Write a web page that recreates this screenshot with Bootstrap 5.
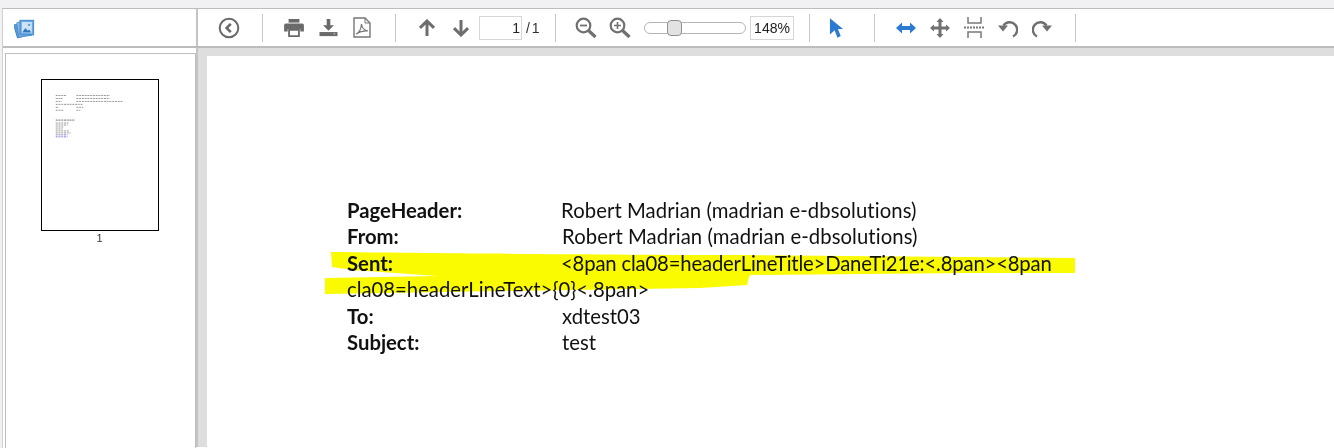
<!DOCTYPE html>
<html lang="en">
<head>
<meta charset="utf-8">
<title>PDF viewer</title>
<link href="https://cdn.jsdelivr.net/npm/bootstrap@5.3.0/dist/css/bootstrap.min.css" rel="stylesheet">
<style>
html,body{height:448px;overflow:hidden;background:#f6f6f6}
.viewer{height:448px;padding-top:8px;background:#f1f1f3}
.frame{height:440px;margin-left:2px;border-left:1px solid #d0d0d0;border-top:1px solid #bcbcbc;background:#fff}
.tbar{height:39px;border-bottom:2px solid #bcbcbc}
.thumb-head{width:195px;padding:2px 0 0 11px;border-right:2px solid #c4c4c4;height:37px}
.tb-tools{padding-left:14px}
.tb-btn{width:34px;height:34px;flex:none;background:none}
.tb-btn svg{display:block;margin:auto}
.tb-sep{width:1px;height:28px;background:#c8c8c8;flex:none;margin:0 14px 0 16px}
.num-box{font:14px/1 "Liberation Sans",sans-serif;color:#222;border:1px solid #d6d6d6;border-radius:0;height:24px;padding:0 1px;text-align:right;box-shadow:none}
.page-box{width:43px;margin-left:1px}
.zoom-box{width:44px;margin-left:4px;text-align:center}
.page-total{font:14px/1 "Liberation Sans",sans-serif;color:#333;margin-left:4px;width:12px;white-space:nowrap;word-spacing:-2px}
.sep-after-total{margin-left:17px;margin-right:13px}
.sep-before-select{margin-left:15px;margin-right:9px}
.sep-after-select{margin-left:21px}
.zoom-range{width:102px;height:16px;margin-left:7px;-webkit-appearance:none;appearance:none;background:transparent;padding:0}
.zoom-range::-webkit-slider-runnable-track{height:12px;border:1px solid #b5b5b5;border-radius:6px;background:#fff}
.zoom-range::-webkit-slider-thumb{-webkit-appearance:none;appearance:none;width:15px;height:16px;margin-top:-3px;border:1px solid #8f8f8f;border-radius:4px;background:#e2e2e2}
.work{height:399px}
.thumb-side{width:195px;padding:5px 0 0 2px;border-right:2px solid #c4c4c4;flex:none}
.thumb-box{width:191px;height:400px;border:1px solid #bfbfbf;padding:25px 2px 0 0}
.thumb-page{width:118px;height:152px;border:1px solid #000;background:#fff;display:block}
.thumb-num{font:11px/14px "Liberation Sans",sans-serif;color:#333}
.doc-pane{background:#dedede;padding:8px 0 0 9px}
.doc-page{background:#fff;height:400px;padding-top:141px;padding-left:140px;font-family:Lato,"Liberation Sans",sans-serif;font-size:20.3px;line-height:26.4px;color:#111;overflow:hidden}
.doc-text{position:relative;width:730px;white-space:nowrap}
.doc-line{display:block}
.doc-key{display:inline-block;width:214px;font-weight:700}
.val-nudge{margin-left:1px}
.name-val{letter-spacing:.08px}
.code-val{letter-spacing:-.17px}
.marker{position:absolute;left:118px;top:200px;width:770px;height:50px;mix-blend-mode:multiply}
</style>
</head>
<body>
<div class="viewer">
<div class="frame d-flex flex-column">
  <div class="tbar d-flex align-items-center flex-none">
    <div class="thumb-head d-flex align-items-center flex-shrink-0">
      <svg width="21" height="21" viewBox="0 0 23 23">
        <rect x="1.5" y="5.5" width="14" height="15" rx="1" transform="rotate(-16 8 13)" fill="#5b9bd8" stroke="#3f83c8"/>
        <rect x="4" y="4" width="15" height="16" rx="1" transform="rotate(-8 11 12)" fill="#8fbde8" stroke="#4a8fd0"/>
        <rect x="6.5" y="2.5" width="15" height="16" fill="#6aa9e2" stroke="#3f83c8"/>
        <rect x="8.5" y="4.5" width="11" height="12" fill="#cfe3f6"/>
        <path d="M9 16l3.500-5 2.500 3 1.500-1.500L19 16z" fill="#2f76bf"/>
        <circle cx="16.500" cy="7.500" r="1.300" fill="#5b9bd8"/>
      </svg>
    </div>
    <div class="tb-tools d-flex align-items-center flex-grow-1">
      <button class="btn tb-btn p-0 border-0" aria-label="Back"><svg width="22" height="22" viewBox="0 0 22 22"><circle cx="11" cy="11" r="9.300" fill="none" stroke="#6a6a6a" stroke-width="2"/><path d="M12.800 6.800L8.600 11l4.200 4.200" fill="none" stroke="#6a6a6a" stroke-width="2.600"/></svg></button>
      <span class="tb-sep"></span>
      <button class="btn tb-btn p-0 border-0" aria-label="Print"><svg width="20" height="18" viewBox="0 0 22 20"><path d="M5 0h12v4H5z" fill="#6a6a6a"/><path d="M2 5h18a2 2 0 0 1 2 2v7h-4v-3H4v3H0V7a2 2 0 0 1 2-2z" fill="#6a6a6a"/><path d="M5.500 12h11v7h-11z" fill="#fff" stroke="#6a6a6a" stroke-width="2"/></svg></button>
      <button class="btn tb-btn p-0 border-0" aria-label="Download"><svg width="19" height="18" viewBox="0 0 20 20"><path d="M8 0h4v7h4l-6 6-6-6h4z" fill="#6a6a6a"/><path d="M0 14.500h20V19H0z" fill="#6a6a6a"/><path d="M15.500 16h2v1h-2z" fill="#ddd"/></svg></button>
      <button class="btn tb-btn p-0 border-0" aria-label="PDF"><svg width="18" height="21" viewBox="0 0 18 21"><path d="M1 1h11l5 5v14H1z" fill="none" stroke="#777" stroke-width="1.400"/><path d="M12 1v5h5" fill="none" stroke="#777"/><path d="M3 17c3-1 5-5 5.500-10 .5 4 3 6.500 6.500 7-4-.5-8 .5-12 3z" fill="none" stroke="#777" stroke-width="1.200"/></svg></button>
      <span class="tb-sep"></span>
      <button class="btn tb-btn p-0 border-0" aria-label="Previous page"><svg width="18" height="18" viewBox="0 0 18 18"><path d="M9 17V2M2 8.800L9 2l7 6.800" fill="none" stroke="#6e6e6e" stroke-width="3"/></svg></button>
      <button class="btn tb-btn p-0 border-0" aria-label="Next page"><svg width="18" height="18" viewBox="0 0 18 18"><path d="M9 1v15M2 9.200L9 16l7-6.800" fill="none" stroke="#6e6e6e" stroke-width="3"/></svg></button>
      <input class="form-control num-box page-box" value="1" aria-label="Page">
      <span class="page-total">/ 1</span>
      <span class="tb-sep sep-after-total"></span>
      <button class="btn tb-btn p-0 border-0" aria-label="Zoom out"><svg width="22" height="22" viewBox="0 0 22 22"><circle cx="8.500" cy="8.500" r="6.800" fill="none" stroke="#707070" stroke-width="2.200"/><path d="M5 8.500h7" stroke="#707070" stroke-width="1.800"/><path d="M13.500 13.500l7 6.500" stroke="#707070" stroke-width="3.200"/></svg></button>
      <button class="btn tb-btn p-0 border-0" aria-label="Zoom in"><svg width="22" height="22" viewBox="0 0 22 22"><circle cx="8.500" cy="8.500" r="6.800" fill="none" stroke="#707070" stroke-width="2.200"/><path d="M5 8.500h7M8.500 5v7" stroke="#707070" stroke-width="1.600"/><path d="M13.500 13.500l7 6.500" stroke="#707070" stroke-width="3.200"/></svg></button>
      <input type="range" class="zoom-range" min="0" max="100" value="26" aria-label="Zoom">
      <input class="form-control num-box zoom-box" value="148%" aria-label="Zoom level">
      <span class="tb-sep sep-before-select"></span>
      <button class="btn tb-btn p-0 border-0" aria-label="Select"><svg width="15" height="20" viewBox="0 0 16 21"><path d="M1 0l14 11.500H9.500l3 7.500-3.500 2-3-8-5 4.500z" fill="#2b7bd0"/></svg></button>
      <span class="tb-sep sep-after-select"></span>
      <button class="btn tb-btn p-0 border-0" aria-label="Fit width"><svg width="20" height="12" viewBox="0 0 20 12"><path d="M0 6l6-5.500V4h8V.5L20 6l-6 5.500V8H6v3.500z" fill="#2b7bd0"/></svg></button>
      <button class="btn tb-btn p-0 border-0" aria-label="Move"><svg width="20" height="20" viewBox="0 0 20 20"><path d="M10 0l3.500 4H11.500v4.500H16V6.500l4 3.500-4 3.500v-2H11.500V16h2L10 20l-3.500-4h2V11.500H4v2L0 10l4-3.500v2h4.500V4h-2z" fill="#707070"/></svg></button>
      <button class="btn tb-btn p-0 border-0" aria-label="Fit page"><svg width="21" height="21" viewBox="0 0 21 21"><path d="M4 0v6h13V0M4 21v-6h13v6" fill="none" stroke="#7a7a7a" stroke-width="1.500"/><path d="M0 10.500h21" stroke="#7a7a7a" stroke-width="2" stroke-dasharray="2 1"/></svg></button>
      <button class="btn tb-btn p-0 border-0" aria-label="Rotate left"><svg width="20" height="20" viewBox="0 0 20 20"><path d="M5.500 7.500A7.500 7.500 0 1 1 15 18.500" fill="none" stroke="#707070" stroke-width="2.400"/><path d="M0 7.500h10L5 13.500z" fill="#707070"/></svg></button>
      <button class="btn tb-btn p-0 border-0" aria-label="Rotate right"><svg width="20" height="20" viewBox="0 0 20 20"><path d="M14.500 7.500A7.500 7.500 0 1 0 5 18.500" fill="none" stroke="#707070" stroke-width="2.400"/><path d="M20 7.500H10L15 13.500z" fill="#707070"/></svg></button>
      <span class="tb-sep"></span>
    </div>
  </div>
  <div class="work d-flex">
    <div class="thumb-side">
      <div class="thumb-box text-center">
        <svg class="thumb-page mx-auto" viewBox="0 0 118 152" aria-hidden="true">
          <g fill="none" stroke="#555" stroke-width="1" stroke-dasharray="2 .8" opacity=".6">
            <path d="M14 15.500h11M35 15.500h34M14 18.500h7M35 18.500h34M14 21.500h6M35 21.500h47M14 24.500h28M14 27.500h3M35 27.500h7M14 30.500h8M35 30.500h4"/>
            <path d="M14 40.500h19" stroke="#111"/>
            <path d="M14 43.500h13M14 45.500h12M14 47.500h8M14 49.500h7M14 51.500h14M14 53.500h15"/>
            <path d="M14 55.500h12M14 57.500h12" stroke="#3030c0"/>
          </g>
        </svg>
        <div class="thumb-num">1</div>
      </div>
    </div>
    <div class="doc-pane flex-grow-1 position-relative">
      <div class="doc-page">
        <div class="doc-text">
          <span class="doc-line"><span class="doc-key">PageHeader:</span><span class="name-val">Robert Madrian (madrian e-dbsolutions)</span></span>
          <span class="doc-line"><span class="doc-key">From:</span><span class="val-nudge name-val">Robert Madrian (madrian e-dbsolutions)</span></span>
          <span class="doc-line"><span class="doc-key">Sent:</span><span class="code-val">&lt;8pan cla08=headerLineTitle&gt;DaneTi21e:&lt;.8pan&gt;&lt;8pan</span></span>
          <span class="doc-line">cla08=headerLineText&gt;{0}&lt;.8pan&gt;</span>
          <span class="doc-line"><span class="doc-key">To:</span><span class="val-nudge">xdtest03</span></span>
          <span class="doc-line"><span class="doc-key">Subject:</span><span class="val-nudge">test</span></span>
        </div>
        <svg class="marker" viewBox="0 0 770 50" aria-hidden="true">
          <path d="M15 4C120 5 300 7 424 7L759 10V25L651 25L434 27C431 33 432 36 431 37L384 40L184 43L9 46L9 30L121 28L37 22L16 19z" fill="#fbfb00"/>
        </svg>
      </div>
    </div>
  </div>
</div>
</div>
<script src="https://cdn.jsdelivr.net/npm/bootstrap@5.3.0/dist/js/bootstrap.bundle.min.js"></script>
</body>
</html>
